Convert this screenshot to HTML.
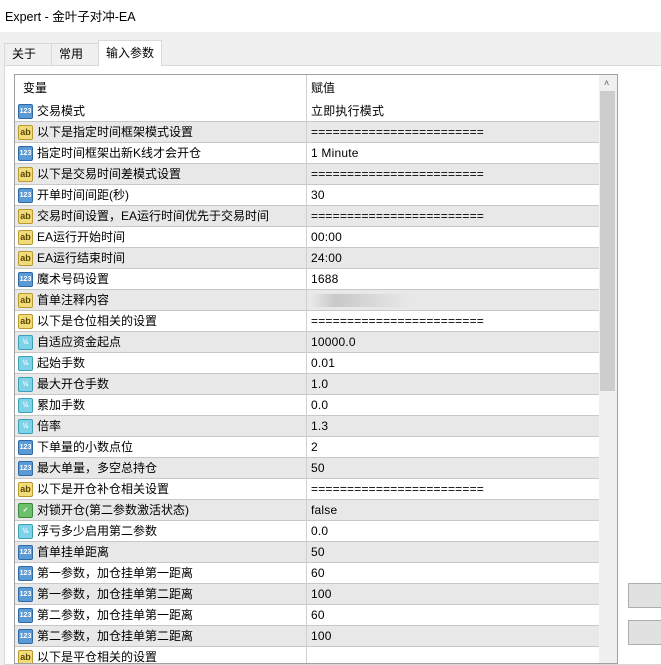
<!DOCTYPE html>
<html><head><meta charset="utf-8"><style>
*{margin:0;padding:0;box-sizing:border-box}
body{width:661px;height:658px;overflow:hidden;background:#f0f0f0;font-family:"Liberation Sans","Noto Sans CJK SC",sans-serif;font-size:12px;color:#000;position:relative}
.title{position:absolute;left:0;top:0;width:661px;height:32px;background:#fff;padding:0 0 0 5px;line-height:34px;font-size:12.5px}
.tab{position:absolute;top:43px;height:23px;border:1px solid #d9d9d9;border-bottom:none;background:#f0f0f0;padding-left:7px;line-height:21px}
.tab.sel{top:40px;height:26px;background:#fff;line-height:25px}
.panel{position:absolute;left:4px;top:65px;width:670px;height:600px;background:#fff;border:1px solid #d9d9d9}
.grid{position:absolute;left:14px;top:74px;width:604px;height:590px;border:1px solid #a0a0a0;background:#fff;overflow:hidden}
.hdr{position:absolute;left:0;top:0;width:584px;height:26px;line-height:27px}
.hdr span{position:absolute;top:0}
.row{position:absolute;left:0;width:584px;height:21px;border-bottom:1px solid #c8c8c8;line-height:21px}
.row.g{background:#e8e8e8}
.row .n{position:absolute;left:22px;top:0;white-space:nowrap}
.row .v{position:absolute;left:296px;top:0;white-space:nowrap;letter-spacing:0.2px}
.vl{position:absolute;left:291px;top:0;width:1px;height:590px;background:#d0d0d0}
.ic{position:absolute;left:3px;top:3px;width:15px;height:15px;border-radius:2px;font-size:7px;font-weight:bold;text-align:center;line-height:13px;font-family:"Liberation Sans",sans-serif}
.i1{background:#5b9bd5;color:#fff;border:1px solid #2e6aa8}
.ia{background:#f2dc7a;color:#5a4600;border:1px solid #b89a30;font-size:9px}
.ih{background:#7fd3e8;color:#fff;border:1px solid #3c9fb8}
.ib{background:#6cc06c;color:#fff;border:1px solid #3a8a3a}
.sb{position:absolute;left:584px;top:0;width:18px;height:590px;background:#f0f0f0}
.th{position:absolute;left:585px;top:16px;width:15px;height:300px;background:#cdcdcd}
.btn{position:absolute;left:628px;width:40px;height:25px;background:#e1e1e1;border:1px solid #adadad}
.blur{position:absolute;left:10px;top:4px;width:100px;height:13px;background:linear-gradient(90deg,#e8e8e8,#c8c8c8 25%,#d8d8d8 60%,#e8e8e8);border-radius:6px}
</style></head><body>
<div class="title">Expert - 金叶子对冲-EA</div>
<div class="tab" style="left:4px;width:48px">关于</div>
<div class="tab" style="left:51px;width:48px">常用</div>
<div class="panel"></div>
<div class="tab sel" style="left:98px;width:64px">输入参数</div>
<div class="grid">
<div class="hdr"><span style="left:8px">变量</span><span style="left:296px">赋值</span></div>
<div class="row" style="top:26px"><div class="ic i1">123</div><span class="n">交易模式</span><span class="v">立即执行模式</span></div>
<div class="row g" style="top:47px"><div class="ic ia">ab</div><span class="n">以下是指定时间框架模式设置</span><span class="v">========================</span></div>
<div class="row" style="top:68px"><div class="ic i1">123</div><span class="n">指定时间框架出新K线才会开仓</span><span class="v">1 Minute</span></div>
<div class="row g" style="top:89px"><div class="ic ia">ab</div><span class="n">以下是交易时间差模式设置</span><span class="v">========================</span></div>
<div class="row" style="top:110px"><div class="ic i1">123</div><span class="n">开单时间间距(秒)</span><span class="v">30</span></div>
<div class="row g" style="top:131px"><div class="ic ia">ab</div><span class="n">交易时间设置，EA运行时间优先于交易时间</span><span class="v">========================</span></div>
<div class="row" style="top:152px"><div class="ic ia">ab</div><span class="n">EA运行开始时间</span><span class="v">00:00</span></div>
<div class="row g" style="top:173px"><div class="ic ia">ab</div><span class="n">EA运行结束时间</span><span class="v">24:00</span></div>
<div class="row" style="top:194px"><div class="ic i1">123</div><span class="n">魔术号码设置</span><span class="v">1688</span></div>
<div class="row g" style="top:215px"><div class="ic ia">ab</div><span class="n">首单注释内容</span><div class="blur" style="left:296px"></div></div>
<div class="row" style="top:236px"><div class="ic ia">ab</div><span class="n">以下是仓位相关的设置</span><span class="v">========================</span></div>
<div class="row g" style="top:257px"><div class="ic ih">½</div><span class="n">自适应资金起点</span><span class="v">10000.0</span></div>
<div class="row" style="top:278px"><div class="ic ih">½</div><span class="n">起始手数</span><span class="v">0.01</span></div>
<div class="row g" style="top:299px"><div class="ic ih">½</div><span class="n">最大开仓手数</span><span class="v">1.0</span></div>
<div class="row" style="top:320px"><div class="ic ih">½</div><span class="n">累加手数</span><span class="v">0.0</span></div>
<div class="row g" style="top:341px"><div class="ic ih">½</div><span class="n">倍率</span><span class="v">1.3</span></div>
<div class="row" style="top:362px"><div class="ic i1">123</div><span class="n">下单量的小数点位</span><span class="v">2</span></div>
<div class="row g" style="top:383px"><div class="ic i1">123</div><span class="n">最大单量，多空总持仓</span><span class="v">50</span></div>
<div class="row" style="top:404px"><div class="ic ia">ab</div><span class="n">以下是开仓补仓相关设置</span><span class="v">========================</span></div>
<div class="row g" style="top:425px"><div class="ic ib">✓</div><span class="n">对锁开仓(第二参数激活状态)</span><span class="v">false</span></div>
<div class="row" style="top:446px"><div class="ic ih">½</div><span class="n">浮亏多少启用第二参数</span><span class="v">0.0</span></div>
<div class="row g" style="top:467px"><div class="ic i1">123</div><span class="n">首单挂单距离</span><span class="v">50</span></div>
<div class="row" style="top:488px"><div class="ic i1">123</div><span class="n">第一参数，加仓挂单第一距离</span><span class="v">60</span></div>
<div class="row g" style="top:509px"><div class="ic i1">123</div><span class="n">第一参数，加仓挂单第二距离</span><span class="v">100</span></div>
<div class="row" style="top:530px"><div class="ic i1">123</div><span class="n">第二参数，加仓挂单第一距离</span><span class="v">60</span></div>
<div class="row g" style="top:551px"><div class="ic i1">123</div><span class="n">第二参数，加仓挂单第二距离</span><span class="v">100</span></div>
<div class="row" style="top:572px"><div class="ic ia">ab</div><span class="n">以下是平仓相关的设置</span></div>
<div class="vl"></div>
<div class="sb"><div style="position:absolute;left:5px;top:3px;font-size:9px;color:#555">˄</div></div>
<div class="th"></div>
</div>
<div class="btn" style="top:583px"></div>
<div class="btn" style="top:620px"></div>
</body></html>
